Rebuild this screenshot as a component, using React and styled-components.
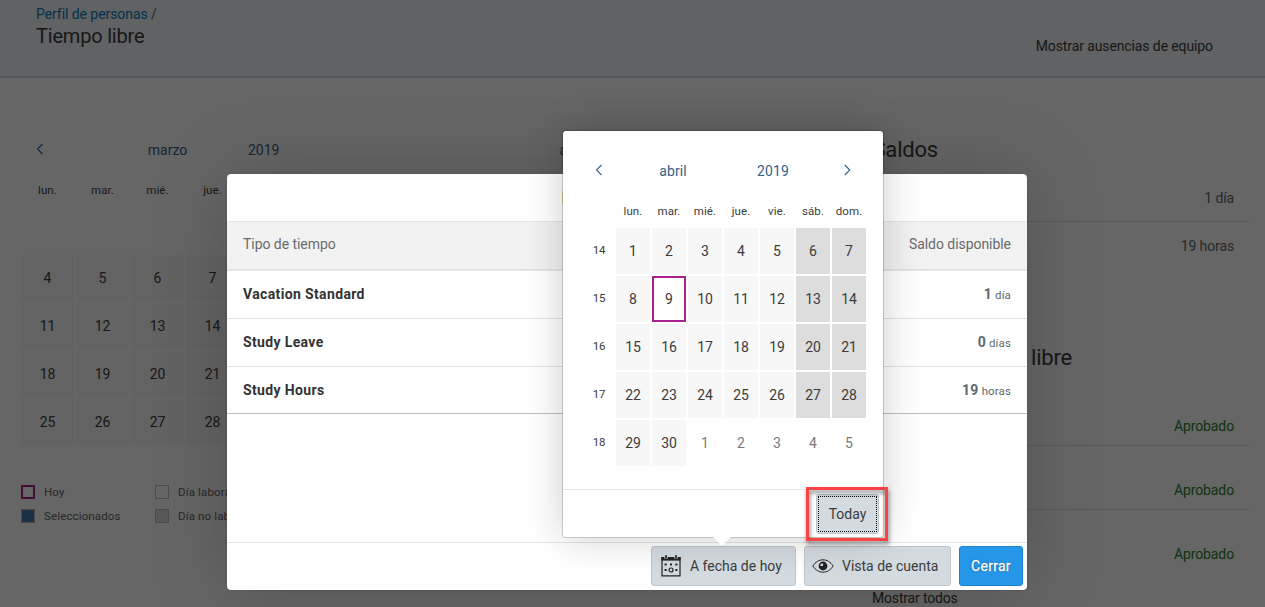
import styled, { createGlobalStyle } from "styled-components";

const GlobalStyle = createGlobalStyle`
  * {
    box-sizing: border-box;
  }
  body {
    margin: 0;
    overflow: hidden;
    font-family: Roboto, "Liberation Sans", sans-serif;
    font-size: 14px;
    color: #3c3c3c;
    background: #fff;
  }
  button {
    font-family: inherit;
  }
`;

const Page = styled.div`
  position: relative;
  height: 607px;
  overflow: hidden;
  background: #fff;
`;
const Header = styled.header`
  height: 78px;
  display: flex;
  justify-content: space-between;
  padding: 5px 52px 0 36px;
  background: #eff4f9;
  border-bottom: 2px solid #c9d9e8;
`;
const Crumb = styled.div`
  line-height: 19px;
  letter-spacing: -0.06px;
  color: #666;
  a {
    color: #007cc0;
  }
`;
const PageTitle = styled.h1`
  margin: 0;
  font-size: 20px;
  line-height: 25px;
  font-weight: 400;
  letter-spacing: -0.2px;
`;
const TeamLink = styled.div`
  padding-top: 32px;
  line-height: 19px;
  letter-spacing: -0.11px;
`;

const Columns = styled.div`
  display: flex;
  height: 529px;
`;
const MonthPane = styled.div`
  width: 840px;
  padding-left: 21px;
`;
const MonthHead = styled.div`
  display: flex;
  align-items: center;
  height: 20px;
  margin-top: 62px;
  color: #346187;
  svg {
    flex: none;
    margin: 0 0 2px 15px;
  }
`;
const MonthName = styled.span`
  width: ${(p) => p.$width}px;
  text-align: center;
  flex: none;
`;
const YearLabel = styled.span`
  margin-left: -43px;
`;
const NextMonth = styled.span`
  margin-left: 280px;
`;
const BigWeek = styled.div`
  display: grid;
  grid-template-columns: repeat(4, 53px);
  column-gap: 2px;
`;
const BigDayName = styled.div`
  height: 24px;
  margin: 18px 0 53px;
  line-height: 24px;
  text-align: center;
  font-size: 11.5px;
  letter-spacing: 0.1px;
`;
const BigDay = styled.div`
  height: 46px;
  margin-bottom: 2px;
  line-height: 46px;
  text-align: center;
  background: #f7f7f7;
`;
const Legend = styled.div`
  display: grid;
  grid-template-columns: 134px 134px;
  margin-top: 33px;
`;
const LegendItem = styled.div`
  display: flex;
  align-items: center;
  height: 24px;
  gap: 9px;
  font-size: 11.5px;
  letter-spacing: 0.14px;
  white-space: nowrap;
  color: #666;
`;
const Swatch = styled.span`
  width: 14px;
  height: 14px;
  flex: none;
  background: ${(p) => p.$fill || "#fff"};
  border: ${(p) => p.$border || "1px solid #bfbfbf"};
`;

const SidePane = styled.div`
  width: 380px;
  margin-left: 30px;
`;
const SideTitle = styled.h2`
  width: ${(p) => p.$width}px;
  margin: ${(p) => p.$top}px 0 0 2px;
  height: 30px;
  line-height: 30px;
  text-align: right;
  font-size: 22px;
  font-weight: 400;
  letter-spacing: -0.2px;
  white-space: nowrap;
`;
const SideRow = styled.div`
  display: flex;
  justify-content: flex-end;
  align-items: flex-end;
  height: ${(p) => p.$height}px;
  padding: 0 16px ${(p) => p.$bottom || 8}px 0;
  line-height: 22px;
  letter-spacing: -0.12px;
  color: ${(p) => (p.$ok ? "#2b7d2b" : "#666")};
  border-bottom: ${(p) => (p.$last ? "0" : "1px solid #e0e0e0")};
`;
const ShowAll = styled.div`
  padding: 14px 0 0 2px;
  line-height: 20px;
  letter-spacing: -0.18px;
`;

const Overlay = styled.div`
  position: absolute;
  inset: 0;
  background: rgba(0, 0, 0, 0.6);
`;

const Dialog = styled.div`
  position: absolute;
  left: 227px;
  top: 174px;
  width: 800px;
  height: 416px;
  display: flex;
  flex-direction: column;
  background: #fff;
  border-radius: 4px;
  overflow: hidden;
  box-shadow: 0 0 80px rgba(0, 0, 0, 0.2), 0 0 1px rgba(0, 0, 0, 0.6);
`;
const DialogTitle = styled.div`
  height: 48px;
  line-height: 48px;
  text-align: center;
  font-size: 16px;
  letter-spacing: -0.5px;
  color: #666;
  border-bottom: 1px solid #e5e5e5;
`;
const TableHead = styled.div`
  display: flex;
  justify-content: space-between;
  height: 49px;
  padding: 0 16px;
  line-height: 45px;
  letter-spacing: -0.05px;
  color: #6a6a6a;
  background: #f2f2f2;
  border-bottom: 2px solid #e3e3e3;
`;
const TableRow = styled.div`
  display: flex;
  justify-content: space-between;
  height: ${(p) => (p.$last ? 47 : 48)}px;
  padding: 0 16px;
  line-height: 47px;
  border-bottom: 1px solid ${(p) => (p.$last ? "#bfbfbf" : "#e2e2e2")};
`;
const TypeName = styled.span`
  font-weight: 700;
  letter-spacing: 0.36px;
  color: #333;
`;
const Amount = styled.span`
  font-size: 11.5px;
  letter-spacing: 0.12px;
  color: #5e696e;
  b {
    font-size: 14px;
    letter-spacing: 0.3px;
  }
`;
const DialogFooter = styled.div`
  display: flex;
  justify-content: flex-end;
  gap: 8px;
  height: 48px;
  margin-top: auto;
  padding: 3px 4px 0;
  border-top: 1px solid #e5e5e5;
`;
const Button = styled.button`
  display: flex;
  align-items: center;
  justify-content: ${(p) => (p.$gap ? "flex-start" : "center")};
  width: ${(p) => p.$width}px;
  height: 40px;
  padding: 0 0 0 ${(p) => (p.$gap ? p.$pad || 9 : 0)}px;
  gap: ${(p) => p.$gap || 0}px;
  font-size: 14px;
  letter-spacing: ${(p) => (p.$primary ? 0.28 : 0)}px;
  white-space: nowrap;
  color: ${(p) => (p.$primary ? "#fff" : "#3c3c3c")};
  text-shadow: ${(p) => (p.$primary ? "0 0 2px rgba(0, 0, 0, 0.6)" : "none")};
  -webkit-text-stroke: ${(p) => (p.$primary ? "0.3px #fff" : "0")};
  background: ${(p) => (p.$primary ? "#2697e8" : "#d3dae0")};
  border: 1px solid ${(p) => (p.$primary ? "#1b84d1" : "#bcc5cc")};
  border-radius: 3px;
`;

const Popover = styled.div`
  position: absolute;
  left: 563px;
  top: 131px;
  width: 320px;
  height: 406px;
  display: flex;
  flex-direction: column;
  background: #fff;
  border-radius: 3px;
  box-shadow: 0 0 0 1px rgba(0, 0, 0, 0.17), 0 0 40px rgba(0, 0, 0, 0.2);
`;
const PopoverArrow = styled.span`
  position: absolute;
  left: 152px;
  bottom: -6px;
  width: 14px;
  height: 14px;
  background: #fff;
  transform: rotate(45deg);
`;
const PopHead = styled.div`
  display: flex;
  align-items: center;
  height: 32px;
  margin-top: 24px;
  padding: 0 32px;
  color: #346187;
  letter-spacing: 0.1px;
  svg {
    flex: none;
    margin-bottom: 2px;
  }
`;
const PopGrid = styled.div`
  display: grid;
  grid-template-columns: 34px repeat(7, 34px);
  grid-template-rows: 36px repeat(5, 46px);
  gap: 2px;
  margin: 3px 0 0 17px;
`;
const DayName = styled.span`
  text-align: center;
  line-height: 43px;
  font-size: 11.5px;
  letter-spacing: 0.1px;
`;
const WeekNo = styled.span`
  padding-left: 4px;
  text-align: center;
  line-height: 45px;
  font-size: 11.5px;
  letter-spacing: -0.2px;
`;
const Day = styled.span`
  display: flex;
  align-items: center;
  justify-content: center;
  color: ${(p) => (p.$kind === "other" ? "#7a7a7a" : "#3c3c3c")};
  background: ${(p) =>
    ({ other: "#fff", weekend: "#ddd", today: "#fff" })[p.$kind] || "#f7f7f7"};
  border: ${(p) => (p.$kind === "today" ? "2px solid #ab218e" : "0")};
`;
const PopFooter = styled.div`
  display: flex;
  justify-content: flex-end;
  height: 48px;
  margin-top: auto;
  padding: 4px 4px 0;
  border-top: 1px solid #e5e5e5;
`;
const TodayButton = styled(Button)`
  outline: 1px dotted #000;
  outline-offset: -3px;
`;
const RedMark = styled.div`
  position: absolute;
  left: 806px;
  top: 487px;
  width: 82px;
  height: 54px;
  border: 3px solid #fb4343;
  filter: drop-shadow(1px 3px 2px rgba(0, 0, 0, 0.5));
`;

const Chevron = ({ right }) => (
  <svg width="8" height="12" viewBox="0 0 8 12" fill="none">
    <path
      d={right ? "M.8 1l5 5-5 5" : "M6.5 1l-5 5 5 5"}
      stroke="#346187"
      strokeWidth="1.1"
    />
  </svg>
);

const CalendarIcon = () => (
  <svg width="20" height="22" viewBox="0 0 20 22" fill="none">
    <path d="M1 2.5h18v18.4H1z" stroke="#222" strokeWidth="1.2" />
    <path d="M.4 2h19.200v3.600H.4z" fill="#222" />
    <path d="M5 0v3.500M15 0v3.500" stroke="#d3dae0" strokeWidth="3.4" />
    <path d="M5 .3v3M15 .3v3" stroke="#222" strokeWidth="1.8" />
    <path
      d="M3.600 9.500h2M9 9.500h2M14.400 9.500h2M3.600 15h2M14.400 15h2"
      stroke="#222"
      strokeWidth="2"
    />
    <circle cx="10" cy="15" r="2" stroke="#222" strokeWidth="1.2" />
  </svg>
);

const EyeIcon = () => (
  <svg width="22" height="14" viewBox="0 0 22 14" fill="none">
    <path
      d="M.8 7C3.600 3 7 .8 11 .8S18.400 3 21.200 7C18.400 11 15 13.200 11 13.200S3.600 11 .8 7z"
      stroke="#222"
      strokeWidth="1"
    />
    <circle cx="11" cy="7" r="4.4" fill="#222" />
    <path d="M11 7V4.200A2.800 2.800 0 0 0 8.200 7z" fill="#d3dae0" />
  </svg>
);

const dayNames = ["lun.", "mar.", "mié.", "jue.", "vie.", "sáb.", "dom."];
const marchDays = [4, 5, 6, 7, 11, 12, 13, 14, 18, 19, 20, 21, 25, 26, 27, 28];
const balances = [
  { type: "Vacation Standard", value: 1, unit: "día" },
  { type: "Study Leave", value: 0, unit: "días" },
  { type: "Study Hours", value: 19, unit: "horas" },
];

const dayKind = (n, col) => {
  if (n > 30) return "other";
  if (n === 9) return "today";
  return col > 4 ? "weekend" : "work";
};

function Background() {
  return (
    <>
      <Header>
        <div>
          <Crumb>
            <a>Perfil de personas</a> /
          </Crumb>
          <PageTitle>Tiempo libre</PageTitle>
        </div>
        <TeamLink>Mostrar ausencias de equipo</TeamLink>
      </Header>
      <Columns>
        <MonthPane>
          <MonthHead>
            <Chevron />
            <MonthName $width={247}>marzo</MonthName>
            <YearLabel>2019</YearLabel>
            <NextMonth>abril</NextMonth>
          </MonthHead>
          <BigWeek>
            {dayNames.slice(0, 4).map((d) => (
              <BigDayName key={d}>{d}</BigDayName>
            ))}
            {marchDays.map((d) => (
              <BigDay key={d}>{d}</BigDay>
            ))}
          </BigWeek>
          <Legend>
            <LegendItem>
              <Swatch $border="2px solid #ab218e" />
              Hoy
            </LegendItem>
            <LegendItem>
              <Swatch />
              Día laborable
            </LegendItem>
            <LegendItem>
              <Swatch $fill="#427cac" />
              Seleccionados
            </LegendItem>
            <LegendItem>
              <Swatch $fill="#ddd" />
              Día no laborable
            </LegendItem>
          </Legend>
        </MonthPane>
        <SidePane>
          <SideTitle $top={57} $width={66}>Saldos</SideTitle>
          <SideRow $height={57} $bottom={12}>1 día</SideRow>
          <SideRow $height={48} $last $bottom={13}>19 horas</SideRow>
          <SideTitle $top={73} $width={200}>Próximo tiempo libre</SideTitle>
          <SideRow $height={73} $ok>Aprobado</SideRow>
          <SideRow $height={64} $ok>Aprobado</SideRow>
          <SideRow $height={64} $bottom={9} $ok $last>Aprobado</SideRow>
          <ShowAll>Mostrar todos</ShowAll>
        </SidePane>
      </Columns>
    </>
  );
}

function AccountDialog() {
  return (
    <Dialog>
      <DialogTitle>Resumen de saldos</DialogTitle>
      <TableHead>
        <span>Tipo de tiempo</span>
        <span>Saldo disponible</span>
      </TableHead>
      {balances.map((b, i) => (
        <TableRow key={b.type} $last={i === balances.length - 1}>
          <TypeName>{b.type}</TypeName>
          <Amount>
            <b>{b.value}</b> {b.unit}
          </Amount>
        </TableRow>
      ))}
      <DialogFooter>
        <Button $width={145} $gap={9}>
          <CalendarIcon />A fecha de hoy
        </Button>
        <Button $width={147} $gap={8} $pad={7}>
          <EyeIcon />
          Vista de cuenta
        </Button>
        <Button $width={64} $primary>
          Cerrar
        </Button>
      </DialogFooter>
    </Dialog>
  );
}

function DatePopover() {
  return (
    <Popover>
      <PopoverArrow />
      <PopHead>
        <Chevron />
        <MonthName $width={140}>abril</MonthName>
        <MonthName $width={60}>2019</MonthName>
        <MonthName $width={41} />
        <Chevron right />
      </PopHead>
      <PopGrid>
        <span />
        {dayNames.map((d) => (
          <DayName key={d}>{d}</DayName>
        ))}
        {[0, 1, 2, 3, 4].map((week) => [
          <WeekNo key={`w${week}`}>{14 + week}</WeekNo>,
          ...dayNames.map((_, col) => {
            const n = week * 7 + col + 1;
            return (
              <Day key={n} $kind={dayKind(n, col)}>
                {n > 30 ? n - 30 : n}
              </Day>
            );
          }),
        ])}
      </PopGrid>
      <PopFooter>
        <TodayButton $width={63}>Today</TodayButton>
      </PopFooter>
    </Popover>
  );
}

function App() {
  return (
    <Page>
      <GlobalStyle />
      <Background />
      <Overlay />
      <AccountDialog />
      <DatePopover />
      <RedMark />
    </Page>
  );
}

export default App;
